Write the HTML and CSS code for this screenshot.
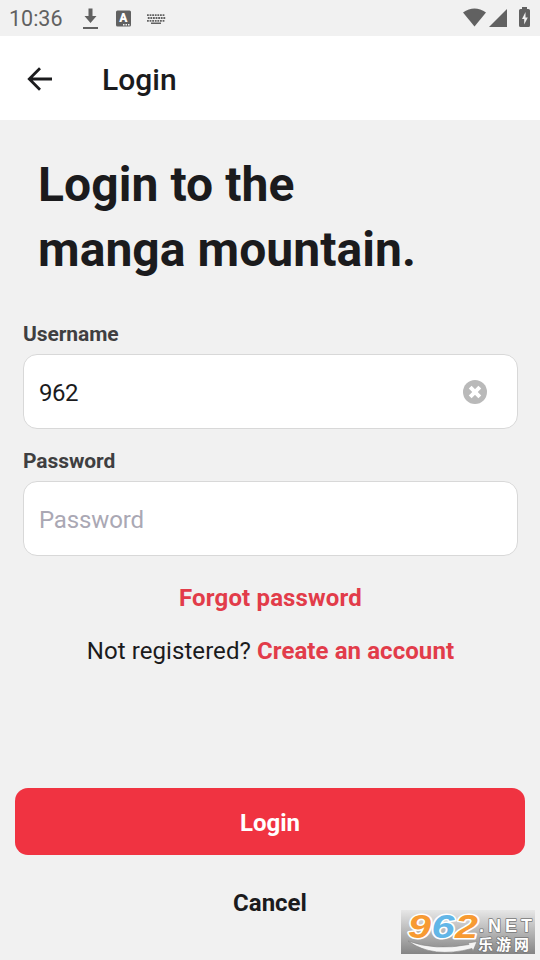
FILE: index.html
```
<!DOCTYPE html>
<html lang="en">

<head>
    <title>Login</title>
    <meta charset="utf-8" />
    <link rel="stylesheet" href="styles.css">
</head>

<body>
    <div class="statusbar">
        <span class="clock">10:36</span>
        <svg class="notifications" width="90" height="24" viewBox="0 0 90 24" fill="#616161">
            <path d="M9.500 2.500h4v7.500h4l-6 7-6-7h4zM4 21h15v2H4z" />
            <rect x="37" y="4.500" width="15" height="16" rx="1.500" />
            <text class="lang" x="44.300" y="16">A</text>
            <path fill="#f1f1f1" d="M44 18h1.500v1.500H44zM46.500 18H48v1.500h-1.500zM49 18h1.500v1.500H49z" />
            <path class="keys" d="M68 9.200h18M68.800 12h18M68 14.800h18" />
            <path d="M72 16.500h10v1.500H72z" />
        </svg>
        <svg class="signals" width="72" height="24" viewBox="0 0 72 24" fill="#616161">
            <path d="M0 6.500Q11.500-1.500 23 6.500L11.500 20.500z" />
            <path d="M44 3V21H26z" />
            <path d="M59 3V1h5v2h1.500Q67 3 67 4.500v15q0 1.500-1.500 1.500h-8Q56 21 56 19.500V4.500Q56 3 57.500 3z" />
            <path fill="#f1f1f1" d="M62.500 6L59 13h2.200v5.500l3.600-7h-2.300z" />
        </svg>
    </div>

    <div class="header">
        <svg class="back" width="26" height="26" viewBox="0 0 26 26">
            <path d="M25 13H2.500M13 2.300L2.300 13 13 23.700" />
        </svg>
        <span class="header-title">Login</span>
    </div>

    <form class="content">
        <h1>Login to the<br />manga mountain.</h1>

        <label for="username">Username</label>
        <div class="field">
            <input type="text" id="username" value="962" />
            <svg class="clear" width="24" height="24" viewBox="0 0 24 24">
                <circle cx="12" cy="12" r="12" />
                <path d="M7.200 7.200l9.600 9.600M16.800 7.200l-9.600 9.600" />
            </svg>
        </div>

        <label for="password">Password</label>
        <div class="field">
            <input type="password" id="password" placeholder="Password" />
        </div>

        <a class="forgot">Forgot password</a>
        <p class="register">Not registered? <a>Create an account</a></p>

        <button type="button" class="login">Login</button>
        <button type="button" class="cancel">Cancel</button>
    </form>

    <svg class="watermark" width="134" height="44" viewBox="0 0 134 44">
        <defs>
            <linearGradient id="shade" x1="0" y1="0" x2="0" y2="1">
                <stop offset="0" stop-color="#e7e7e7" />
                <stop offset="1" stop-color="#858585" />
            </linearGradient>
        </defs>
        <rect width="134" height="44" fill="url(#shade)" />
        <path class="swoosh" d="M7 31Q34 41 68 34.500L67 33 76 31.500 72 41 71 38.500Q32 49 7 31z" />
        <g class="digits">
            <text class="orange" x="7" y="27.500" textLength="23" lengthAdjust="spacingAndGlyphs">9</text>
            <text class="blue" x="30.500" y="27.500" textLength="23" lengthAdjust="spacingAndGlyphs">6</text>
            <text class="orange" x="54" y="27.500" textLength="23" lengthAdjust="spacingAndGlyphs">2</text>
        </g>
        <text class="net" x="78" y="21.500" textLength="53">.NET</text>
        <text class="site" x="77" y="39.500" textLength="51">乐游网</text>
    </svg>
</body>

</html>
```

FILE: styles.css
```
* {
    box-sizing: border-box;
}

body {
    margin: 0;
    height: 960px;
    overflow: hidden;
    background: #f1f1f1;
    color: #1b1b1d;
    font-family: Roboto, sans-serif;
    font-size: 24px;
}

.statusbar {
    display: flex;
    align-items: center;
    height: 36px;
    padding: 0 5px 0 9px;
    color: #616161;
}

.clock {
    width: 70px;
    padding-top: 2px;
    font-size: 21.500px;
    line-height: 34px;
}

.signals {
    margin-left: auto;
}

.lang {
    fill: #fff;
    font-size: 12px;
    font-weight: 900;
    text-anchor: middle;
}

.keys {
    fill: none;
    stroke: #616161;
    stroke-width: 1.800;
    stroke-dasharray: 1.800 .8;
}

.header {
    display: flex;
    align-items: center;
    height: 84px;
    padding: 2px 27px 0;
    background: #fff;
}

.back {
    fill: none;
    stroke: #1b1b1d;
    stroke-width: 2.800;
}

.header-title {
    margin-left: 49px;
    font-size: 30px;
    font-weight: 500;
}

.content {
    display: flex;
    flex-direction: column;
    padding: 32px 15px 0;
}

h1 {
    margin: 0 0 38px 23px;
    font-size: 48px;
    line-height: 65px;
    letter-spacing: .06px;
}

label {
    margin-left: 8px;
    color: #3f3f41;
    font-size: 21px;
    font-weight: 700;
    line-height: 28px;
    letter-spacing: -.08px;
}

.field {
    display: flex;
    align-items: center;
    height: 75px;
    margin: 6px 7px 18px 8px;
    padding: 0 30px 0 15px;
    background: #fff;
    border: 1px solid #d8d8d8;
    border-radius: 14px;
}

.field input {
    flex: 1;
    min-width: 0;
    padding: 2px 0 0;
    border: 0;
    outline: 0;
    background: none;
    color: #1b1b1d;
    font: 24px Roboto, sans-serif;
    letter-spacing: -.15px;
}

#username {
    letter-spacing: -.5px;
}

.field input::placeholder {
    color: #aaa8b4;
}

.clear circle {
    fill: #b9b9b9;
}

.clear path {
    stroke: #fff;
    stroke-width: 4;
}

a {
    color: #e23c4a;
    font-weight: 700;
    letter-spacing: .08px;
}

.forgot {
    margin-top: 8px;
    padding-left: 1px;
    line-height: 32px;
    letter-spacing: .15px;
    text-align: center;
}

.register {
    margin: 21px 0 121px;
    padding-left: 1px;
    line-height: 32px;
    letter-spacing: .07px;
    text-align: center;
}

button {
    border: 0;
    background: none;
    color: #1b1b1d;
    font: 700 24px Roboto, sans-serif;
}

.login {
    height: 67px;
    padding-top: 4px;
    background: #f03341;
    border-radius: 13px;
    color: #fff;
}

.cancel {
    margin-top: 32px;
    height: 32px;
}

/* site badge in the corner, over the page */
.watermark {
    position: absolute;
    left: 401px;
    top: 910px;
}

.watermark text {
    paint-order: stroke;
    stroke-linejoin: round;
}

.digits text {
    font: italic 700 34px "Liberation Sans", sans-serif;
    stroke: #fff;
    stroke-width: 3;
}

.watermark .orange {
    fill: #f79a32;
}

.watermark .blue {
    fill: #62b6e7;
}

.net,
.site {
    fill: #fff;
    stroke: #777;
    stroke-width: 1.500;
}

.net {
    font: 700 18px "Liberation Sans", sans-serif;
}

.site {
    font: 700 15px "Noto Sans CJK SC", sans-serif;
}

.swoosh {
    fill: #f4f4f4;
    stroke: #858585;
    stroke-width: .6;
}
```
